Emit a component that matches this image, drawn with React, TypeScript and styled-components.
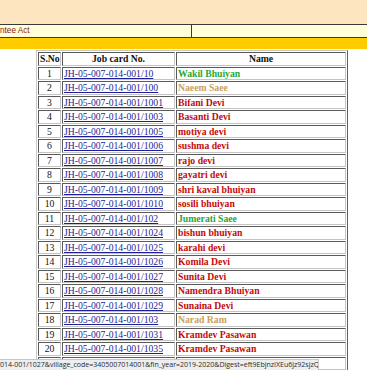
import React from 'react';
import styled, { createGlobalStyle } from 'styled-components';

const GlobalStyle = createGlobalStyle`
  html, body {
    margin: 0;
    padding: 0;
    background: #ffffff;
    overflow: hidden;
  }
  body {
    width: 367px;
    height: 370px;
    font-family: "Liberation Serif", "Times New Roman", serif;
  }
`;

type Tone = 'green' | 'tan' | 'red';

const toneColors: Record<Tone, string> = {
  green: '#1fa83a',
  tan: '#c9a060',
  red: '#c40a0a',
};

const rows: { job: string; name: string; tone: Tone }[] = [
  { job: '10', name: 'Wakil Bhuiyan', tone: 'green' },
  { job: '100', name: 'Naeem Saee', tone: 'tan' },
  { job: '1001', name: 'Bifani Devi', tone: 'red' },
  { job: '1003', name: 'Basanti Devi', tone: 'red' },
  { job: '1005', name: 'motiya devi', tone: 'red' },
  { job: '1006', name: 'sushma devi', tone: 'red' },
  { job: '1007', name: 'rajo devi', tone: 'red' },
  { job: '1008', name: 'gayatri devi', tone: 'red' },
  { job: '1009', name: 'shri kaval bhuiyan', tone: 'red' },
  { job: '1010', name: 'sosili bhuiyan', tone: 'red' },
  { job: '102', name: 'Jumerati Saee', tone: 'green' },
  { job: '1024', name: 'bishun bhuiyan', tone: 'red' },
  { job: '1025', name: 'karahi devi', tone: 'red' },
  { job: '1026', name: 'Komila Devi', tone: 'red' },
  { job: '1027', name: 'Sunita Devi', tone: 'red' },
  { job: '1028', name: 'Namendra Bhuiyan', tone: 'red' },
  { job: '1029', name: 'Sunaina Devi', tone: 'red' },
  { job: '103', name: 'Narad Ram', tone: 'tan' },
  { job: '1031', name: 'Kramdev Pasawan', tone: 'red' },
  { job: '1035', name: 'Kramdev Pasawan', tone: 'red' },
  { job: '104', name: 'Sahdev Bhuiyan', tone: 'green' },
];

const Page = styled.div`
  position: relative;
  width: 367px;
  height: 370px;
  overflow: hidden;
`;

const HeaderBand = styled.div`
  height: 24px;
  background: #fde6bf;
`;

const TitleRow = styled.div`
  display: grid;
  grid-template-columns: 192px 1fr;
  height: 12px;
  background: #ffffd9;
  border-top: 1px solid #3a3a3a;
  border-bottom: 1px solid #3a3a3a;
`;

const TitleCell = styled.div`
  font-family: "Liberation Sans", Arial, sans-serif;
  font-size: 8.2px;
  line-height: 12px;
  color: #8a1a1a;
  white-space: nowrap;
  border-right: 1px solid #3a3a3a;
`;

const EmptyCell = styled.div``;

const GoldBar = styled.div`
  height: 11px;
  background: #ffcc00;
`;

const TableWrap = styled.div`
  padding: 1px 0 0 36px;
`;

const Grid = styled.table`
  width: 312px;
  border-collapse: separate;
  border-spacing: 1px;
  border: 1px solid;
  border-color: #c8c8c8 #606060 #606060 #c8c8c8;
  font-size: 9.7px;
  table-layout: fixed;
`;

const Cell = styled.td<{ $align?: 'left' | 'center' }>`
  height: 11.5px;
  padding: 0 1px;
  border: 1px solid;
  border-color: #5a5a5a #c4c4c4 #c4c4c4 #5a5a5a;
  text-align: ${(p) => p.$align || 'left'};
  line-height: 11.5px;
  white-space: nowrap;
  overflow: hidden;
  color: #111;
`;

const HeadCell = styled(Cell).attrs({ as: 'th' })`
  font-weight: bold;
  text-align: center;
`;

const JobLink = styled.a`
  color: #1e1e96;
  text-decoration: underline;
`;

const Name = styled.span<{ $tone: Tone }>`
  font-weight: bold;
  color: ${(p) => toneColors[p.$tone]};
`;

const StatusBar = styled.div`
  position: absolute;
  left: 0;
  bottom: 0;
  width: 318px;
  height: 10px;
  background: #eeeeee;
  border-top: 1px solid #c6c6c6;
  border-right: 1px solid #c6c6c6;
  font-family: "Open Sans", "Noto Sans", sans-serif;
  font-size: 7px;
  line-height: 10px;
  color: #2a2a2a;
  white-space: nowrap;
  overflow: hidden;
`;

export default function App() {
  return (
    <Page>
      <GlobalStyle />
      <HeaderBand />
      <TitleRow>
        <TitleCell>ntee Act</TitleCell>
        <EmptyCell />
      </TitleRow>
      <GoldBar />
      <TableWrap>
        <Grid>
          <colgroup>
            <col style={{ width: 23 }} />
            <col style={{ width: 113 }} />
            <col />
          </colgroup>
          <thead>
            <tr>
              <HeadCell>S.No</HeadCell>
              <HeadCell>Job card No.</HeadCell>
              <HeadCell>Name</HeadCell>
            </tr>
          </thead>
          <tbody>
            {rows.map((row, index) => (
              <tr key={index}>
                <Cell $align="center">{index + 1}</Cell>
                <Cell>
                  <JobLink href="#">{`JH-05-007-014-001/${row.job}`}</JobLink>
                </Cell>
                <Cell>
                  <Name $tone={row.tone}>{row.name}</Name>
                </Cell>
              </tr>
            ))}
          </tbody>
        </Grid>
      </TableWrap>
      <StatusBar>014-001/1027&amp;village_code=3405007014001&amp;fin_year=2019-2020&amp;Digest=eft9EbjnzIXEu6jz92sjzQ</StatusBar>
    </Page>
  );
}
